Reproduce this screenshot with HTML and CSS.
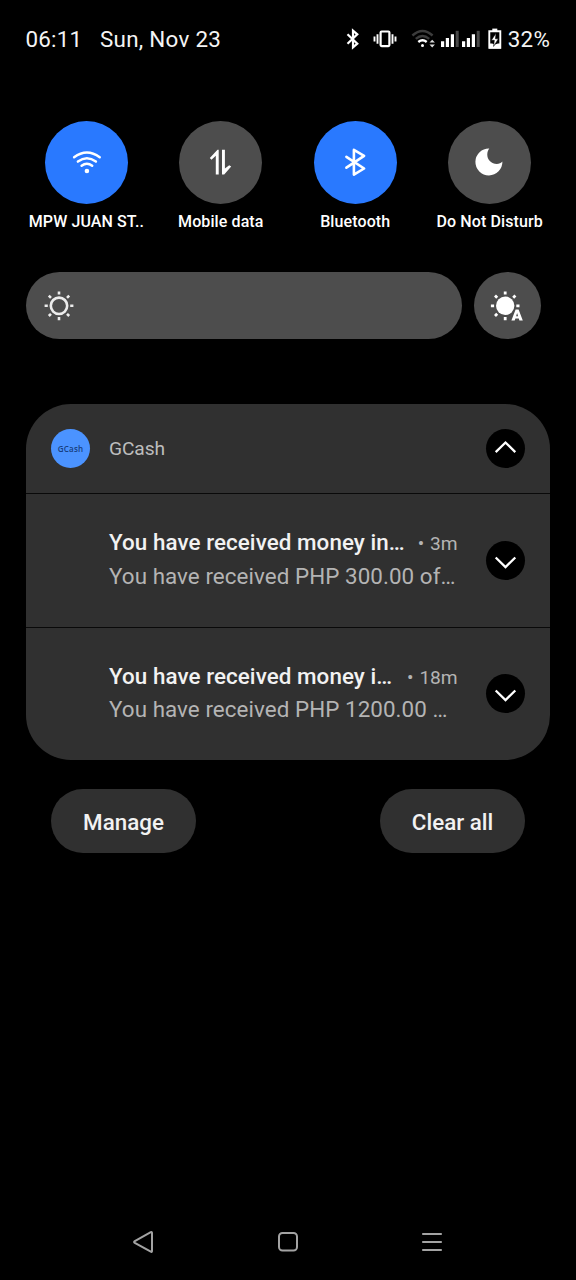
FILE: index.html
```html
<!DOCTYPE html>
<html lang="en">
<head>
<meta charset="utf-8">
<title>Notification shade</title>
<link rel="stylesheet" href="styles.css">
</head>
<body>
<header class="status">
  <span class="time">06:11</span>
  <span class="date">Sun, Nov 23</span>
  <div class="status-icons">
    <svg class="s-bt" width="14" height="22" viewBox="0 0 14 22" fill="none" stroke="#fff" stroke-width="2.2"><path d="M1.5 6.2 11.3 15.6 7 19.4V2.6L11.3 6.4 1.5 15.8"/></svg>
    <svg class="s-vib" width="24" height="18" viewBox="0 0 24 18" fill="none" stroke="#fff"><rect x="7.6" y="1.5" width="8.8" height="14.6" rx="1" stroke-width="2.2"/><path d="M4.5 4.2v9.6M19.5 4.2v9.6M1.5 6.5v5M22.5 6.5v5" stroke-width="1.9"/></svg>
    <svg class="s-wifi" width="26" height="20" viewBox="0 0 26 20" fill="none" stroke-width="2.4"><path d="M1.4 6.5Q11.5-2.7 21.6 6.5M4.8 9.9Q11.5 4 18.2 9.9" stroke="#3c3c3c"/><path d="M7.3 13Q11.5 9.5 15.7 13" stroke="#fff"/><circle cx="11.5" cy="16.5" r="1.5" fill="#fff"/><path d="M18.5 13.6 21.2 10.8 23.9 13.6zM18.5 15.6 21.2 18.4 23.9 15.6z" fill="#ddd"/></svg>
    <svg class="s-sig" width="19" height="18" viewBox="0 0 19 18" fill="#fff"><path d="M0 11.2h3.2V17H0zM4.8 8h3.2v9H4.8zM9.8 4.2H13V17H9.8z"/><path d="M14.7.8h3V17h-3z" fill="#484848"/></svg>
    <svg class="s-sig" width="19" height="18" viewBox="0 0 19 18" fill="#fff"><path d="M0 11.2h3.2V17H0zM4.8 8h3.2v9H4.8zM9.8 4.2H13V17H9.8z"/><path d="M14.7.8h3V17h-3z" fill="#484848"/></svg>
    <svg class="s-bat" width="14" height="22" viewBox="0 0 14 22"><path d="M4.3.6h5v2.5h-5z" fill="#fff"/><path d="M1.3 3.3h11v16.4h-11z" fill="#000" stroke="#fff" stroke-width="1.9"/><path d="M1 15.6h3l3 1 3-1h3v4.9H1z" fill="#fff"/><path d="M8 5.2 3.3 12.3h3L5.6 18.4 10.4 10.8H7.5z" fill="#fff" stroke="#000" stroke-width=".6"/></svg>
  </div>
  <span class="percent">32%</span>
</header>

<section class="tiles">
  <div class="tile">
    <div class="disc on"><svg width="33" height="33" viewBox="-.9 0 33 33" fill="none" stroke="#fff" stroke-width="2.5" stroke-linecap="round"><path d="M3.2 11.3Q16 1.7 28.8 11.3M7 15.6Q16 8.9 25 15.6M10.7 19.8Q16 15.6 21.3 19.8"/><circle cx="16" cy="25" r="2.3" fill="#fff" stroke="none"/></svg></div>
    <span class="label">MPW JUAN ST..</span>
  </div>
  <div class="tile">
    <div class="disc"><svg width="33" height="33" viewBox="-.4 -.2 33 33" fill="#fff"><path d="M14.3 3.6V28.2H11.4V9.6L7.1 13.5 5.4 11.7 13.1 3.6z"/><path d="M17.6 3.6h2.9V22.2L24.8 19.1 26.8 20.4 19.8 28.2H17.6z"/></svg></div>
    <span class="label">Mobile data</span>
  </div>
  <div class="tile">
    <div class="disc on"><svg width="33" height="33" viewBox="-.1 -.3 33 33" fill="none" stroke="#fff" stroke-width="2.6" stroke-linejoin="round" stroke-linecap="round"><path d="M7.3 10.5 25 22.2 14.8 28.3V3.6L25 9.6 7.3 21.4"/></svg></div>
    <span class="label">Bluetooth</span>
  </div>
  <div class="tile">
    <div class="disc"><svg width="33" height="33" viewBox="0 -.1 33 33"><path d="M16.3 2.3A13.5 13.5 0 1 0 29.4 15.5C27 18.5 20.5 18.8 16.8 14.9 13.3 11.2 13.8 5.4 16.3 2.3z" fill="#fff"/></svg></div>
    <span class="label">Do Not Disturb</span>
  </div>
</section>

<section class="brightness">
  <div class="slider"><svg width="32" height="32" viewBox="0 0 32 32" fill="none" stroke="#ececec" stroke-width="2.6"><circle cx="16" cy="15.8" r="8.2"/><path d="M16 1.4v3.2M16 27v3.2M1.6 15.8h3.2M27.2 15.8h3.2M5.8 5.6 8 7.8M24 23.8l2.2 2.2M5.8 26 8 23.8M24 7.8l2.2-2.2"/></svg></div>
  <div class="auto"><svg width="36" height="34" viewBox="0 0 36 34" stroke="#fff" stroke-width="2.8"><circle cx="16.2" cy="16.8" r="9.2" fill="#fff" stroke="none"/><path d="M16.2 2.4v3.2M16.2 28v3.2M1.9 16.8h3.2M27.3 16.8h3.2M6 6.6 8.2 8.8M6 27l2.2-2.2M24.2 8.8l2.2-2.2"/><path d="M22.4 31.6 26.6 20.4H29.6L33.8 31.6H30.4L29.8 29.6H26.4L25.7 31.6zM27.1 27.2H29.1L28.1 24z" fill="#fff" fill-rule="evenodd" stroke="none"/></svg></div>
</section>

<section class="card">
  <div class="card-head">
    <div class="logo">GCash</div>
    <span class="app">GCash</span>
    <div class="chev"><svg width="25" height="25" viewBox="-.5 -.5 25 25"><path d="M2.2 15.6 12 6 21.8 15.6"/></svg></div>
  </div>
  <div class="note">
    <div class="text">
      <div class="line"><span class="title">You have received money in…</span><span class="age"><span class="dot">•</span>3m</span></div>
      <div class="body">You have received PHP 300.00 of…</div>
    </div>
    <div class="chev"><svg width="25" height="25" viewBox="-.5 -.5 25 25"><path d="M2.2 9 12 18.6 21.8 9"/></svg></div>
  </div>
  <div class="note">
    <div class="text">
      <div class="line"><span class="title">You have received money i…</span><span class="age"><span class="dot">•</span>18m</span></div>
      <div class="body">You have received PHP 1200.00 …</div>
    </div>
    <div class="chev"><svg width="25" height="25" viewBox="-.5 -.5 25 25"><path d="M2.2 9 12 18.6 21.8 9"/></svg></div>
  </div>
</section>

<div class="actions">
  <button class="pill">Manage</button>
  <button class="pill">Clear all</button>
</div>

<nav class="nav">
  <svg width="24" height="24" viewBox="0 0 24 24"><path d="M20 2.9V21Q20 22.4 18.8 21.7L2.8 12.9Q1.4 12 2.8 11.1L18.8 2.2Q20 1.6 20 2.9z"/></svg>
  <svg width="24" height="24" viewBox="0 0 24 24"><rect x="3" y="3" width="18" height="17.6" rx="3.5"/></svg>
  <svg width="24" height="24" viewBox="0 0 24 24"><path d="M2.2 4h19.6M2.2 12h19.6M2.2 20h19.6"/></svg>
</nav>
</body>
</html>
```
FILE: styles.css
```css
* { box-sizing: border-box; }
body {
  margin: 0;
  width: 576px;
  height: 1280px;
  overflow: hidden;
  background: #000;
  color: #fff;
  font-family: Roboto, "Liberation Sans", sans-serif;
  display: flex;
  flex-direction: column;
}
svg { display: block; flex: none; }
.status {
  display: flex;
  align-items: center;
  height: 77px;
  padding: 0 26px 0 25.5px;
  font-size: 22.4px;
  white-space: nowrap;
  color: #f4f4f4;
}
.time { width: 74.5px; letter-spacing: .2px; }
.date { letter-spacing: .28px; }
.percent { letter-spacing: .35px; margin-right: -.3px; }
.status-icons { display: flex; align-items: center; margin-left: auto; }
.s-bt { margin-right: 13px; }
.s-vib { margin-right: 14px; }
.s-wifi { margin-right: 4px; }
.s-sig { margin-right: 2px; }
.s-bat { margin: 0 6px 0 5px; }
.tiles {
  display: grid;
  grid-template-columns: repeat(4, 1fr);
  padding: 44px 19.2px 0;
}
.tile { display: flex; flex-direction: column; align-items: center; }
.disc {
  width: 83px;
  height: 83px;
  border-radius: 50%;
  background: #4d4d4d;
  display: grid;
  place-items: center;
}
.disc.on { background: #2979ff; }
.label {
  margin-top: 8px;
  font-size: 16px;
  line-height: 20px;
  font-weight: 500;
  letter-spacing: .1px;
  white-space: nowrap;
}
.brightness {
  display: flex;
  gap: 11.5px;
  padding: 40px 35.5px 0 25.5px;
}
.slider, .auto {
  height: 67px;
  border-radius: 34px;
  background: #4d4d4d;
  display: flex;
  align-items: center;
}
.slider { flex: 1; padding-left: 17.5px; }
.auto { width: 67px; justify-content: center; }
.card {
  margin: 64.5px 26px 0 25.5px;
  height: 356.5px;
  border-radius: 45px;
  background: #303030;
  flex: none;
}
.card-head, .note {
  display: flex;
  align-items: center;
  padding: 0 25.5px;
}
.card-head { height: 89.5px; }
.logo {
  width: 39px;
  height: 39px;
  border-radius: 50%;
  background: #4b93ff;
  color: #173f80;
  display: grid;
  place-items: center;
  font: 600 8px "Open Sans", sans-serif;
  letter-spacing: .25px;
}
.app { margin-left: 19px; font-size: 19.2px; letter-spacing: -.1px; color: #bdbdbd; }
.chev {
  margin-left: auto;
  width: 39px;
  height: 39px;
  border-radius: 50%;
  background: #000;
  display: grid;
  place-items: center;
}
.chev svg { fill: none; stroke: #fff; stroke-width: 2.3; }
.note {
  height: 133.5px;
  border-top: 1px solid #090909;
  padding-left: 83.5px;
}
.text { width: 348.5px; white-space: nowrap; font-size: 22.4px; margin-top: -1.5px; }
.line { display: flex; align-items: baseline; justify-content: space-between; height: 33.5px; line-height: 33.5px; }
.title { font-weight: 500; letter-spacing: .07px; color: #f2f2f2; }
.age { font-size: 19.2px; letter-spacing: -.1px; color: #b4b4b4; }
.dot { font-size: 19.2px; margin-right: 6px; }
.body { color: #b4b4b4; line-height: 33.5px; letter-spacing: .06px; }
.actions {
  display: flex;
  justify-content: space-between;
  padding: 29px 51px 0;
}
.pill {
  width: 145px;
  height: 64px;
  border: 0;
  border-radius: 32px;
  background: #303030;
  color: #f2f2f2;
  font: 500 22.4px Roboto, sans-serif;
  padding: 1px 0 0;
}
.nav {
  margin-top: auto;
  height: 77px;
  padding: 0 132px;
  display: flex;
  align-items: center;
  justify-content: space-between;
}
.nav svg { fill: none; stroke: #a3a3a3; stroke-width: 2; }
```
